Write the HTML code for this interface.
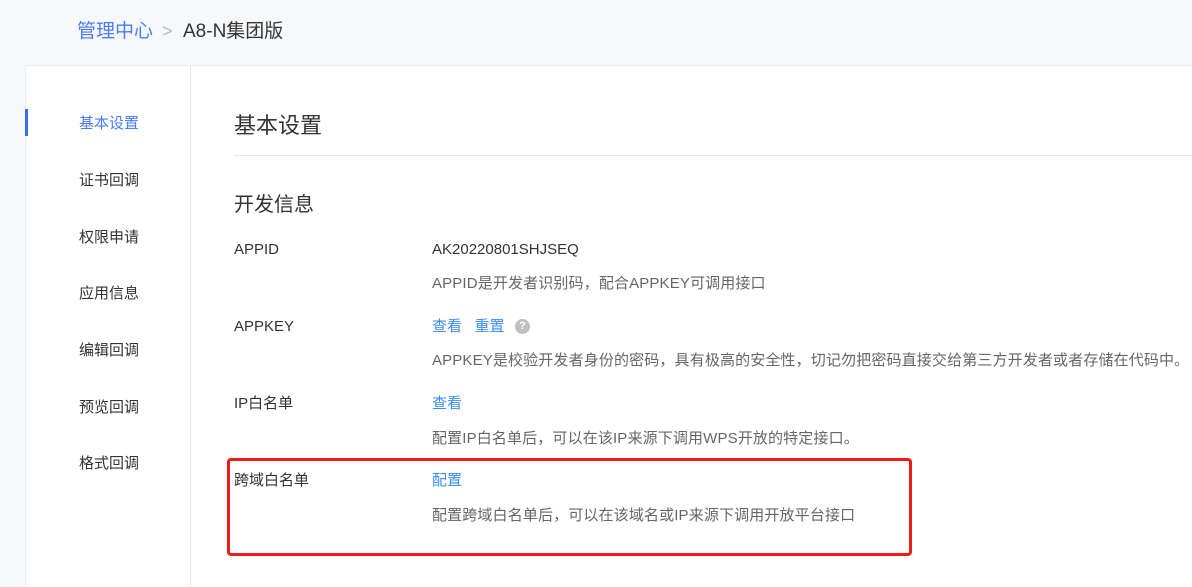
<!DOCTYPE html><html><head><meta charset="utf-8"><style>
body{margin:0;width:1192px;height:587px;background:#f7f8fa;position:relative;overflow:hidden;font-family:"Liberation Sans","Noto Sans CJK SC",sans-serif;color:#333}
.a{position:absolute;white-space:nowrap;line-height:1}
.card{position:absolute;left:25px;top:65px;right:0;bottom:0;background:#fff;border-top:1px solid #eceef2;border-left:1px solid #eceef2}
.side{position:absolute;left:190px;top:66px;bottom:0;width:1px;background:#e6e8eb}
.nav{font-size:15px;color:#333;left:79px}
.lab{font-size:15px;color:#333;left:234px}
.val{font-size:15px;left:432px;color:#333}
.desc{font-size:15px;left:432px;color:#666;letter-spacing:0.14px}
.blue{color:#3a8cf6}
</style></head><body>
<div class="a" style="left:77px;top:22px;font-size:19px;color:#4a7cf6">管理中心</div>
<div class="a" style="left:162px;top:22px;font-size:18px;color:#bbb">&gt;</div>
<div class="a" style="left:183px;top:22px;font-size:19px;color:#333">A8-N集团版</div>
<div class="card"></div>
<div class="side"></div>
<div class="a" style="left:25px;top:109px;width:3px;height:27px;background:#3a6cf6"></div>
<div class="a nav" style="top:116px;color:#4a7cf6">基本设置</div>
<div class="a nav" style="top:173px">证书回调</div>
<div class="a nav" style="top:230px">权限申请</div>
<div class="a nav" style="top:286px">应用信息</div>
<div class="a nav" style="top:343px">编辑回调</div>
<div class="a nav" style="top:400px">预览回调</div>
<div class="a nav" style="top:456px">格式回调</div>
<div class="a" style="left:234px;top:115px;font-size:22px;color:#333">基本设置</div>
<div class="a" style="left:234px;top:155px;right:0;height:1px;background:#e6e8eb"></div>
<div class="a" style="left:234px;top:195px;font-size:20px;color:#333">开发信息</div>
<div class="a lab" style="top:242px">APPID</div>
<div class="a val" style="top:242px">AK20220801SHJSEQ</div>
<div class="a desc" style="top:276px">APPID是开发者识别码，配合APPKEY可调用接口</div>
<div class="a lab" style="top:319px">APPKEY</div>
<div class="a val blue" style="top:319px">查看&nbsp;&nbsp;&nbsp;重置</div>
<div class="a" style="left:515px;top:319px;width:15px;height:15px;border-radius:50%;background:#c0c0c0;color:#fff;font-size:11px;font-weight:bold;text-align:center;line-height:15px">?</div>
<div class="a desc" style="top:353px">APPKEY是校验开发者身份的密码，具有极高的安全性，切记勿把密码直接交给第三方开发者或者存储在代码中。</div>
<div class="a lab" style="top:396px">IP白名单</div>
<div class="a val blue" style="top:396px">查看</div>
<div class="a desc" style="top:431px">配置IP白名单后，可以在该IP来源下调用WPS开放的特定接口。</div>
<div class="a lab" style="top:473px">跨域白名单</div>
<div class="a val blue" style="top:473px">配置</div>
<div class="a desc" style="top:508px">配置跨域白名单后，可以在该域名或IP来源下调用开放平台接口</div>
<div class="a" style="left:227px;top:458px;width:679px;height:92px;border:3px solid #f01c1c;border-radius:4px"></div>
</body></html>
